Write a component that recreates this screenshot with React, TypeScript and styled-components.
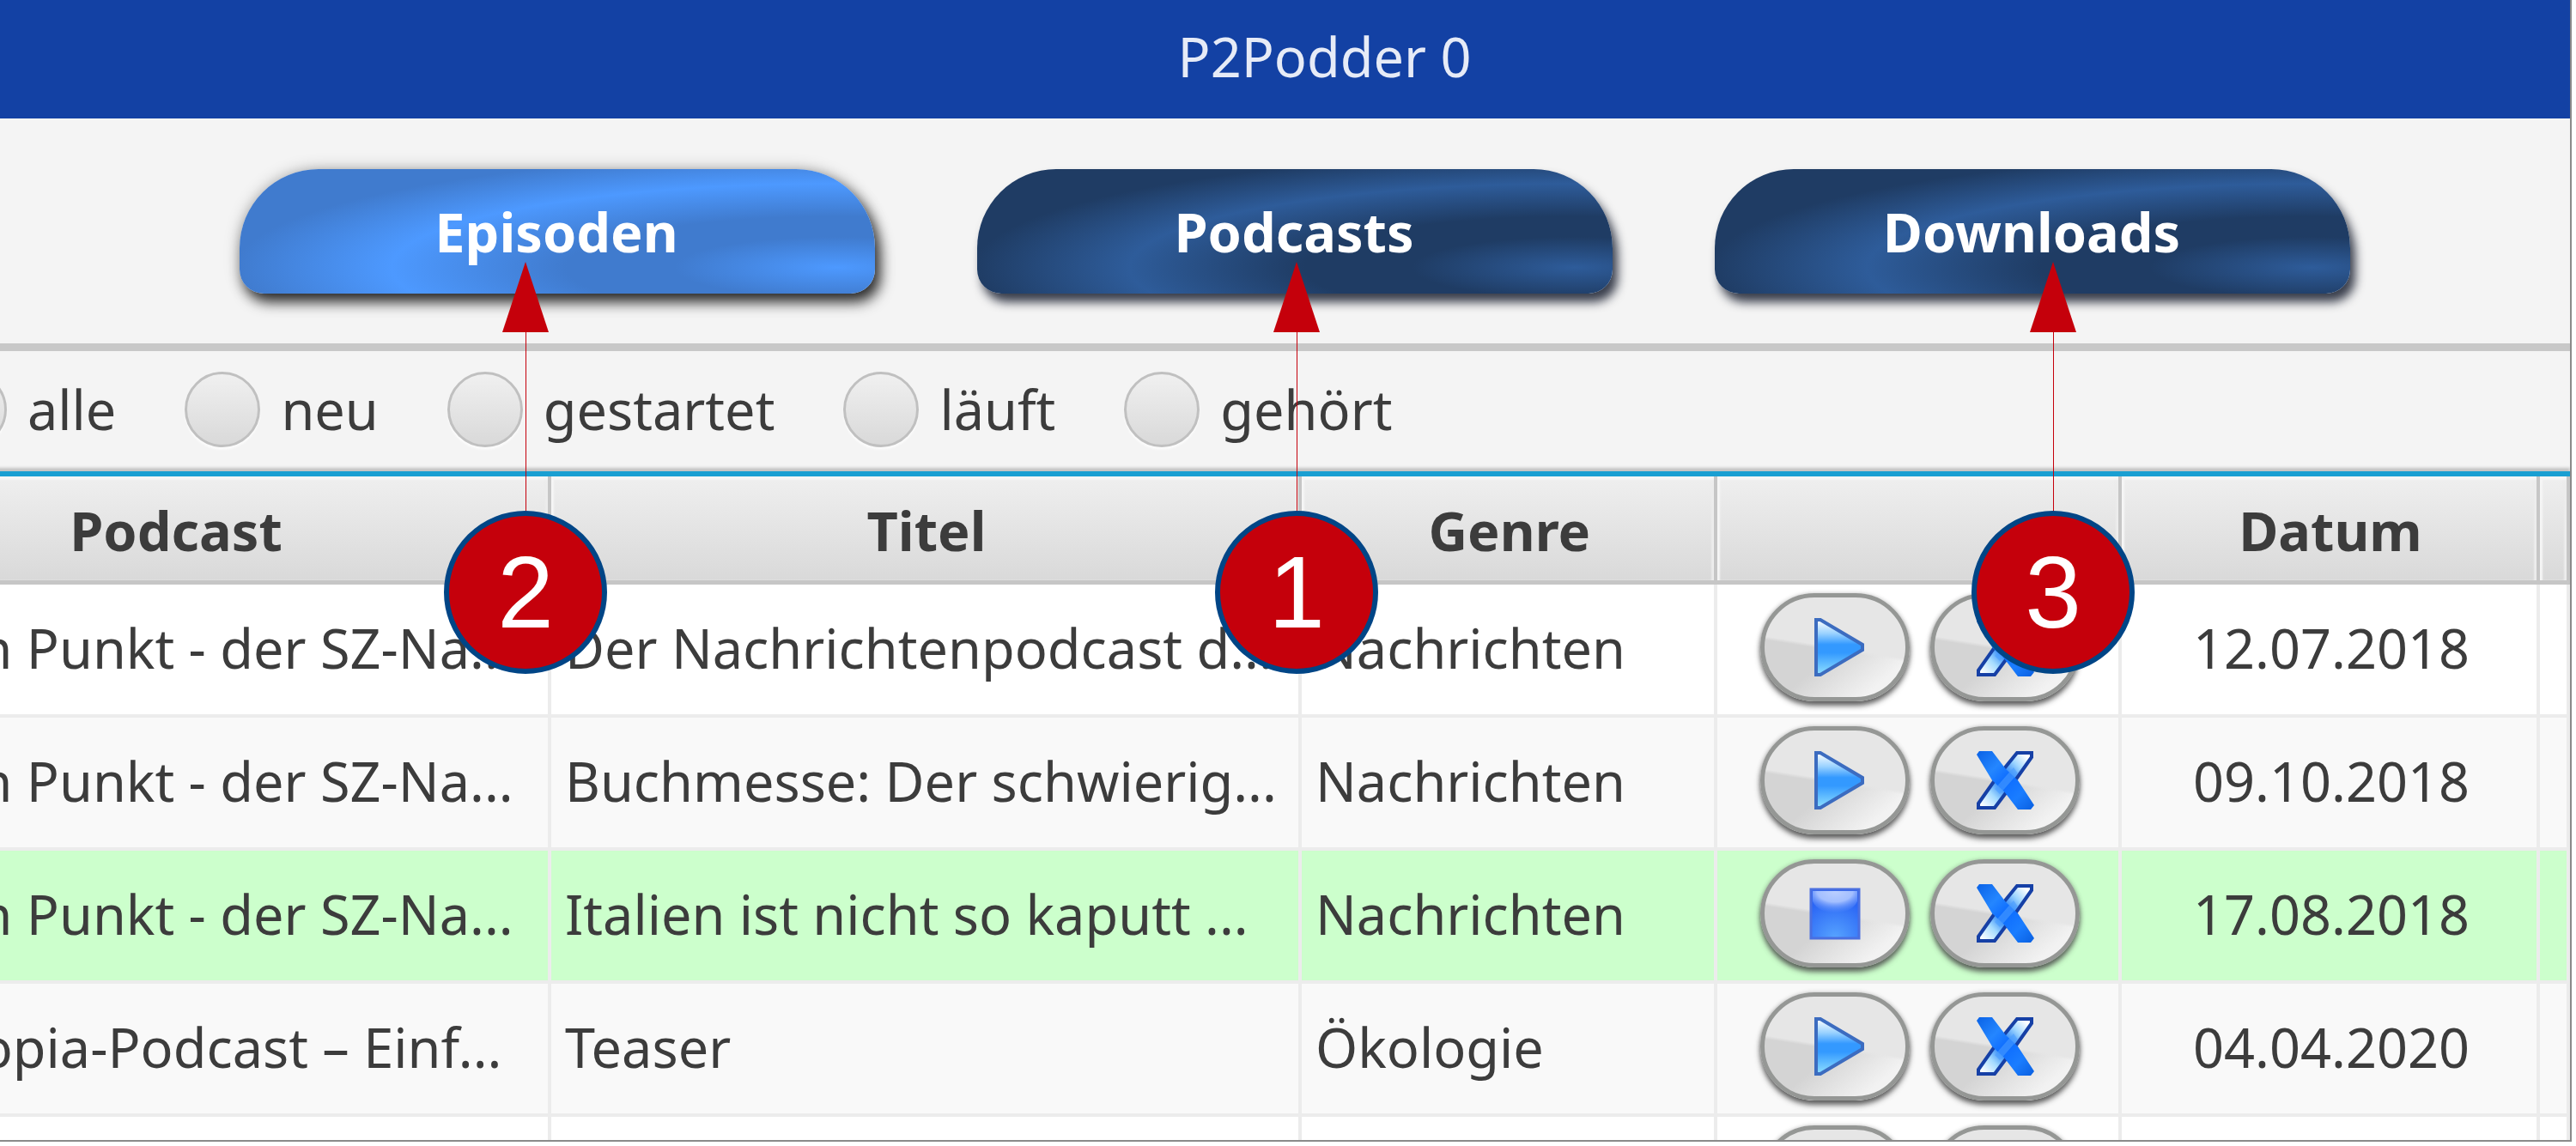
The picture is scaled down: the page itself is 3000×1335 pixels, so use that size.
import React from "react";
import styled, { createGlobalStyle, css } from "styled-components";

const Global = createGlobalStyle`
  *, *::before, *::after { box-sizing: border-box; }
  body { margin: 0; background: #fff; }
`;

const Window = styled.div`
  position: relative;
  height: calc(100vh - 5px);
  margin-right: 5px;
  overflow: hidden;
  display: flex;
  flex-direction: column;
  border-right: 2px solid #8a8a8a;
  border-bottom: 2px solid #8a8a8a;
  background: #f4f4f4;
  color: #3c3c3c;
  font: 63px/88px "Noto Sans", "Open Sans", sans-serif;
`;

const TitleBar = styled.header`
  flex: none;
  display: flex;
  justify-content: center;
  padding: 22px 0 28px 92px;
  background: #1341a4;
  color: #e6ebf7;
`;

const Title = styled.h1`
  margin: 0;
  font: inherit;
`;

const Tabs = styled.nav`
  flex: none;
  display: flex;
  gap: 119px;
  padding: 59px 0 58px 279px;
  border-bottom: 9px solid #c8c8c8;
`;

const Tab = styled.button<{ $active?: boolean }>`
  flex: none;
  width: 740px;
  height: 145px;
  padding: 0 2px 0 0;
  border: 0;
  border-radius: 92px 92px 28px 28px;
  color: #fff;
  font: inherit;
  font-weight: bold;
  ${(p) =>
    p.$active
      ? css`
          background: radial-gradient(ellipse 700px 132px at 94% 79%, #4d99ff 0%, #407bce 27%, #407bce 45%, #4d99ff 74%, #407bce 100%);
          box-shadow: 6px 10px 16px rgba(0, 0, 0, 0.8), 0 0 18px rgba(0, 0, 0, 0.25);
        `
      : css`
          background: radial-gradient(ellipse 700px 132px at 94% 79%, #2e5c9a 0%, #1f3c64 27%, #1f3c64 45%, #2e5c9a 74%, #1f3c64 100%);
          box-shadow: 6px 10px 12px rgba(10, 16, 34, 0.8);
        `}
`;

const Filters = styled.fieldset`
  flex: none;
  display: flex;
  align-items: center;
  gap: 80px;
  margin: 0 0 0 -80px;
  padding: 24px 0 28px;
  border: 0;
`;

const Filter = styled.label`
  display: flex;
  align-items: center;
  gap: 24px;
`;

const Radio = styled.input`
  appearance: none;
  width: 88px;
  height: 88px;
  margin: 0;
  border: 3px solid #c0c0c0;
  border-radius: 50%;
  background: linear-gradient(#f0f0f0, #d9d9d9);
  box-shadow: 0 3px 2px #fbfbfb;
`;

/* The first column starts left of the visible area, as in a scrolled view. */
const Table = styled.table`
  flex: none;
  width: calc(100% + 232px);
  margin-left: -232px;
  table-layout: fixed;
  border-spacing: 0;
  border-top: 6px solid #1a9fd2;
  box-shadow: 0 -4px 3px #c4c4c4;
`;

const Head = styled.th`
  height: 126px;
  padding: 4px 0 0 4px;
  border-right: 4px solid #c6c6c6;
  border-bottom: 5px solid #c6c6c6;
  background: linear-gradient(#efefef, #d9d9d9);
  box-shadow: inset 3px 4px 2px #f6f6f6, inset -3px 0 2px #ededed;
`;

const Row = styled.tr<{ $playing: boolean; $odd: boolean }>`
  background: ${(p) => (p.$playing ? "#ccffcc" : p.$odd ? "#fff" : "#f9f9f9")};
`;

const Cell = styled.td<{ $align?: "center" }>`
  height: 155px;
  padding: 0 10px 4px 16px;
  border-right: 4px solid #ececec;
  border-bottom: 4px solid #ececec;
  overflow: hidden;
  white-space: nowrap;
  text-align: ${(p) => p.$align ?? "left"};
`;

const Actions = styled.div`
  display: flex;
  justify-content: center;
  gap: 24px;
  padding-bottom: 2px;
`;

const Pill = styled.button`
  display: flex;
  align-items: center;
  justify-content: center;
  flex: none;
  width: 174px;
  height: 126px;
  padding: 0;
  border: 5px solid #959795;
  border-radius: 63px;
  background: linear-gradient(189deg, #e6e6e6 50%, rgba(230, 230, 230, 0) 53%),
    linear-gradient(140deg, #d4d4d4 52%, #f2f2f2 84%);
  box-shadow: 0 5px 6px rgba(70, 70, 70, 0.85), 0 0 5px rgba(90, 90, 90, 0.3);
`;

const Marks = styled.div`
  position: absolute;
  inset: 0;
  pointer-events: none;
`;

const Mark = styled.div<{ $x: number }>`
  position: absolute;
  top: 305px;
  left: ${(p) => p.$x}px;
  width: 190px;
  display: flex;
  flex-direction: column;
  align-items: center;
`;

const Bubble = styled.span`
  display: flex;
  align-items: center;
  justify-content: center;
  width: 190px;
  height: 190px;
  border: 6px solid #004586;
  border-radius: 50%;
  background: #c5000b;
  color: #fff;
  font: 118px/118px "Liberation Sans", Arial, sans-serif;
`;

const Arrow = () => (
  <svg width="56" height="290" viewBox="0 0 56 290" aria-hidden="true">
    <path d="M28 0 55 82H1z" fill="#c5000b" />
    <path d="M28.5 82V290" stroke="#c5000b" strokeWidth="1" />
  </svg>
);

const PlayIcon = () => (
  <svg width="84" height="72" viewBox="0 0 84 72" aria-hidden="true">
    <defs>
      <linearGradient id="play" x1="0" y1="0" x2="0" y2="1">
        <stop offset="0" stopColor="#fff" />
        <stop offset=".25" stopColor="#9ad2ff" />
        <stop offset=".45" stopColor="#3399ff" />
        <stop offset=".6" stopColor="#3399ff" />
        <stop offset="1" stopColor="#8fe0ff" />
      </linearGradient>
    </defs>
    <path d="M20 4h5L74 33v6L25 68h-5z" fill="url(#play)" stroke="#3c6cc0" strokeWidth="4" />
  </svg>
);

const StopIcon = () => (
  <svg width="72" height="72" viewBox="0 0 72 72" aria-hidden="true">
    <defs>
      <radialGradient id="stop" cx=".5" cy="1" r=".8">
        <stop offset="0" stopColor="#57a4ff" />
        <stop offset="1" stopColor="#2b66f5" />
      </radialGradient>
      <radialGradient id="stopGloss" cx=".5" cy="0" r="1" gradientTransform="translate(.1 0) scale(.8 1)">
        <stop offset="0" stopColor="#bcd0ff" />
        <stop offset=".5" stopColor="#a3bfff" />
        <stop offset="1" stopColor="#5f90fb" stopOpacity="0" />
      </radialGradient>
    </defs>
    <path d="M8 8h56v57H8z" fill="url(#stop)" stroke="#4a6fe0" strokeWidth="3" />
    <path d="M10 10h52v12C54 40 18 40 10 22z" fill="url(#stopGloss)" />
  </svg>
);

const CrossIcon = () => (
  <svg width="72" height="72" viewBox="0 0 72 72" aria-hidden="true">
    <defs>
      <linearGradient id="slash" x1="0" y1="1" x2="1" y2="0">
        <stop offset=".05" stopColor="#fff" />
        <stop offset=".25" stopColor="#a4dbff" />
        <stop offset=".42" stopColor="#2f86f5" />
        <stop offset=".58" stopColor="#2f86f5" />
        <stop offset=".75" stopColor="#9fd6ff" />
        <stop offset=".92" stopColor="#fff" />
      </linearGradient>
      <linearGradient id="backslash" x1="0" y1="0" x2="1" y2="1">
        <stop offset="0" stopColor="#0a62e6" />
        <stop offset=".3" stopColor="#2486ff" />
        <stop offset=".5" stopColor="#0d6cff" />
        <stop offset=".75" stopColor="#1a7dff" />
        <stop offset="1" stopColor="#0a5fe0" />
      </linearGradient>
    </defs>
    <path d="M50 4h17v5L48 36 24 68H5v-5L24 36z" fill="url(#slash)" stroke="#1640a6" strokeWidth="4" />
    <path d="M3 6 6 2h15l16 21L51 36 70 65 66 70H51L35 49 21 36z" fill="url(#backslash)" />
    <path d="M24 46 46 21l5 7-21 24z" fill="#4a9cff" opacity=".6" />
  </svg>
);

const SZ = "Auf den Punkt - der SZ-Na...";
const EPISODES = [
  { podcast: SZ, title: "Der Nachrichtenpodcast d...", genre: "Nachrichten", date: "12.07.2018", playing: false },
  { podcast: SZ, title: "Buchmesse: Der schwierig...", genre: "Nachrichten", date: "09.10.2018", playing: false },
  { podcast: SZ, title: "Italien ist nicht so kaputt ...", genre: "Nachrichten", date: "17.08.2018", playing: true },
  { podcast: "Der Utopia-Podcast – Einf...", title: "Teaser", genre: "Ökologie", date: "04.04.2020", playing: false },
  { podcast: "", title: "", genre: "", date: "", playing: false },
];

const COLUMNS = [
  { name: "Podcast", width: "27.1%" },
  { name: "Titel", width: "27.1%" },
  { name: "Genre", width: "15%" },
  { name: "", width: "14.6%" },
  { name: "Datum", width: "15.1%" },
  { name: "", width: "auto" },
];

const Col = styled.col<{ $width: string }>`
  width: ${(p) => p.$width};
`;

export default function App() {
  return (
    <Window>
      <Global />
      <TitleBar>
        <Title>P2Podder 0</Title>
      </TitleBar>
      <Tabs>
        <Tab $active>Episoden</Tab>
        <Tab>Podcasts</Tab>
        <Tab>Downloads</Tab>
      </Tabs>
      <Filters>
        {["alle", "neu", "gestartet", "läuft", "gehört"].map((name) => (
          <Filter key={name}>
            <Radio type="radio" name="state" />
            {name}
          </Filter>
        ))}
      </Filters>
      <Table>
        <colgroup>
          {COLUMNS.map((c, i) => (
            <Col key={i} $width={c.width} />
          ))}
        </colgroup>
        <thead>
          <tr>
            {COLUMNS.map((c, i) => (
              <Head key={i}>{c.name}</Head>
            ))}
          </tr>
        </thead>
        <tbody>
          {EPISODES.map((e, i) => (
            <Row key={i} $playing={e.playing} $odd={i % 2 === 0}>
              <Cell>{e.podcast}</Cell>
              <Cell>{e.title}</Cell>
              <Cell>{e.genre}</Cell>
              <Cell>
                <Actions>
                  <Pill aria-label={e.playing ? "Stopp" : "Abspielen"}>{e.playing ? <StopIcon /> : <PlayIcon />}</Pill>
                  <Pill aria-label="Löschen">
                    <CrossIcon />
                  </Pill>
                </Actions>
              </Cell>
              <Cell $align="center">{e.date}</Cell>
              <Cell />
            </Row>
          ))}
        </tbody>
      </Table>
      <Marks>
        <Mark $x={517}>
          <Arrow />
          <Bubble>2</Bubble>
        </Mark>
        <Mark $x={1415}>
          <Arrow />
          <Bubble>1</Bubble>
        </Mark>
        <Mark $x={2296}>
          <Arrow />
          <Bubble>3</Bubble>
        </Mark>
      </Marks>
    </Window>
  );
}
